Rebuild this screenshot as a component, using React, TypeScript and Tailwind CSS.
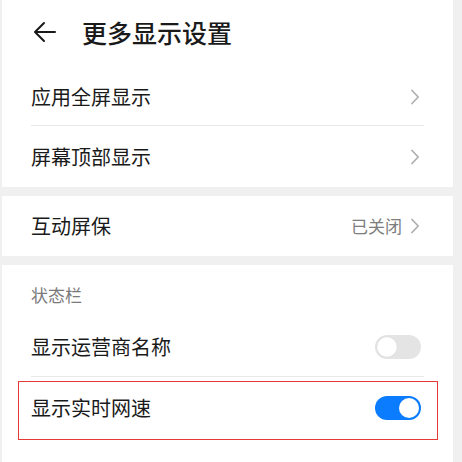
import React from "react";

const font = { fontFamily: '"Noto Sans CJK SC", "Noto Sans", sans-serif' };

function Chevron() {
  return (
    <svg width="10" height="16" viewBox="0 0 10 16" fill="none" className="shrink-0">
      <path d="M2 1.5 L8.2 8 L2 14.5" stroke="#b0b0b0" strokeWidth="1.8" strokeLinecap="round" strokeLinejoin="round" />
    </svg>
  );
}

function Toggle({ on }: { on: boolean }) {
  return on ? (
    <div className="w-[46px] h-[24px] rounded-full bg-[#0a7cfd] flex items-center justify-end pr-[2px]">
      <div className="w-[20px] h-[20px] rounded-full bg-white" />
    </div>
  ) : (
    <div className="w-[46px] h-[24px] rounded-full bg-[#e4e4e4] flex items-center justify-start pl-[2px]">
      <div className="w-[20px] h-[20px] rounded-full bg-white shadow-[0_0_1px_rgba(0,0,0,0.15)]" />
    </div>
  );
}

function Divider() {
  return <div className="mx-[29px] h-px bg-[#e8e8e8]" />;
}

export default function App() {
  return (
    <div className="w-[462px] h-[462px] overflow-hidden bg-[#f0f0f0] pl-[2px] pr-[9px]" style={font}>
      <div className="flex flex-col w-[451px]">
        {/* header + first group */}
        <div className="bg-white">
          <div className="h-[69px] pt-[16px] pl-[31px] flex items-start">
            <div className="h-[32px] flex items-center">
              <svg width="24" height="22" viewBox="0 0 24 22" fill="none">
                <path d="M22 11 H2.5 M11 2 L2 11 L11 20" stroke="#1a1a1a" strokeWidth="2" strokeLinecap="round" strokeLinejoin="round" />
              </svg>
              <span className="ml-[25px] text-[25px] leading-[32px] font-medium text-[#1a1a1a]">更多显示设置</span>
            </div>
          </div>
          <div className="h-[56px] flex items-center justify-between pl-[29px] pr-[33px]">
            <span className="text-[20px] text-[#1a1a1a]">应用全屏显示</span>
            <Chevron />
          </div>
          <Divider />
          <div className="h-[61px] flex items-center justify-between pl-[29px] pr-[33px]">
            <span className="text-[20px] text-[#1a1a1a]">屏幕顶部显示</span>
            <Chevron />
          </div>
        </div>

        <div className="h-[9px]" />

        <div className="bg-white h-[60px] flex items-center justify-between pl-[29px] pr-[33px]">
          <span className="text-[20px] text-[#1a1a1a]">互动屏保</span>
          <div className="flex items-center gap-[8px]">
            <span className="text-[17px] text-[#7d7d7d]">已关闭</span>
            <Chevron />
          </div>
        </div>

        <div className="h-[9px]" />

        <div className="bg-white h-[197px]">
          <div className="h-[53px] pt-[20px] pl-[29px]">
            <span className="block text-[17px] leading-[20px] text-[#7a7a7a]">状态栏</span>
          </div>
          <div className="h-[58px] flex items-center justify-between pl-[29px] pr-[32px]">
            <span className="text-[20px] text-[#1a1a1a]">显示运营商名称</span>
            <Toggle on={false} />
          </div>
          <Divider />
          <div className="relative h-[62px] flex items-center justify-between pl-[29px] pr-[32px]">
            <span className="text-[20px] text-[#1a1a1a]">显示实时网速</span>
            <Toggle on={true} />
            <div className="absolute left-[16px] top-[4px] w-[420px] h-[59px] border border-[#e53935] pointer-events-none" />
          </div>
        </div>
      </div>
    </div>
  );
}
